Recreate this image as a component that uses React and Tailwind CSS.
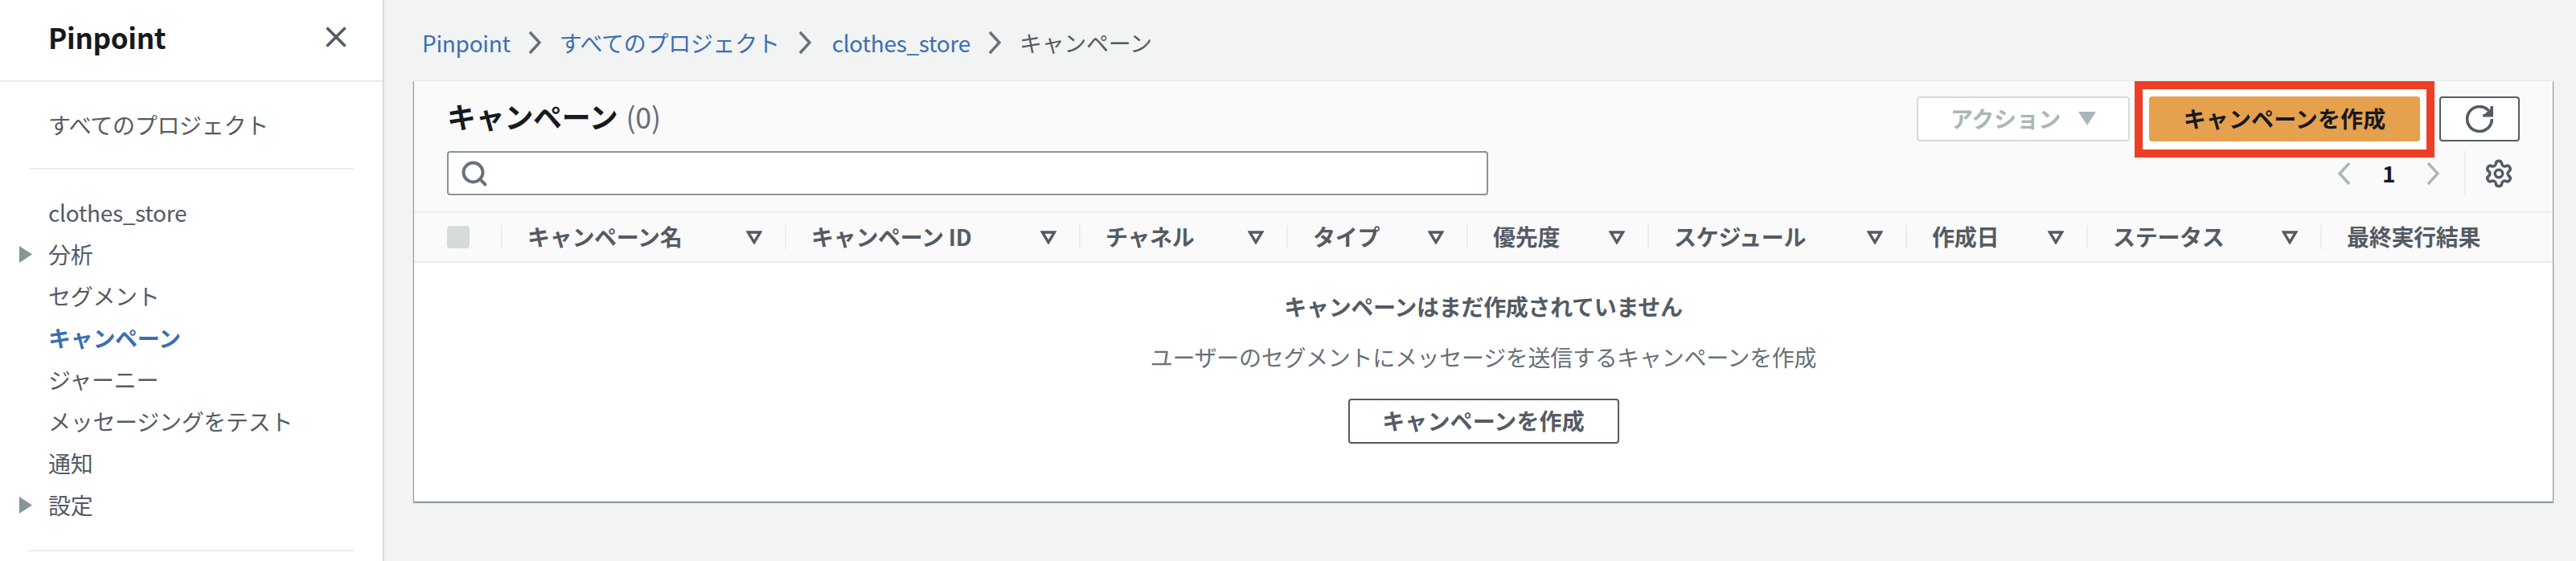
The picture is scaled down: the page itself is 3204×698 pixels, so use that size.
import React from 'react';
import { Search, Settings } from 'lucide-react';

const navItems = [
  { label: 'clothes_store' },
  { label: '分析', expandable: true },
  { label: 'セグメント' },
  { label: 'キャンペーン', active: true },
  { label: 'ジャーニー' },
  { label: 'メッセージングをテスト' },
  { label: '通知' },
  { label: '設定', expandable: true },
];

const columns = [
  { label: 'キャンペーン名', width: 'w-[353px]' },
  { label: 'キャンペーン ID', width: 'w-[366px]' },
  { label: 'チャネル', width: 'w-[258px]' },
  { label: 'タイプ', width: 'w-[224px]' },
  { label: '優先度', width: 'w-[225px]' },
  { label: 'スケジュール', width: 'w-[321px]' },
  { label: '作成日', width: 'w-[225px]' },
  { label: 'ステータス', width: 'w-[291px]' },
  { label: '最終実行結果', width: 'flex-1', noSort: true },
];

const Chevron = ({ dir = 'right', className }) => (
  <svg viewBox="0 0 17 30" className={className} fill="none" stroke="currentColor" strokeWidth="3.4">
    <path d={dir === 'right' ? 'M2 2l12 13L2 28' : 'M15 2L3 15l12 13'} />
  </svg>
);

const SortIcon = () => (
  <svg viewBox="0 0 20 17" className="w-[20px] h-[17px] text-[#545b64]" fill="none" stroke="currentColor" strokeWidth="3.4">
    <path d="M2.5 2h15L10 14.5z" />
  </svg>
);

const RefreshIcon = () => (
  <svg viewBox="0 0 32 32" className="w-[34px] h-[34px]" fill="none" stroke="currentColor" strokeWidth="3.4">
    <path d="M26.5 6A14.5 14.5 0 1 0 30.5 16" />
    <path d="M20 12h10.5V1" />
    <path d="M30.5 3v9H21z" fill="currentColor" strokeWidth="1" />
  </svg>
);

const Sidebar = () => (
  <aside className="w-[478px] h-full shrink-0 bg-white border-r-2 border-[#d5dbdb] flex flex-col">
    <div className="h-[102px] shrink-0 border-b-2 border-[#eaeded] flex items-center justify-between pl-[60px] pr-[45px] pb-[8px]">
      <span className="text-[35px] font-bold text-[#16191f]">Pinpoint</span>
      <svg viewBox="0 0 26 26" className="w-[26px] h-[26px] text-[#545b64]" fill="none" stroke="currentColor" strokeWidth="3.6">
        <path d="M1.5 1.5l23 23M24.5 1.5l-23 23" />
      </svg>
    </div>
    <div className="h-[107px] shrink-0 flex items-center pl-[60px] pb-[2px] text-[28px] text-[#545b64]">
      すべてのプロジェクト
    </div>
    <div className="h-[2px] shrink-0 mx-[36px] bg-[#eaeded]" />
    <nav className="mt-[27px]">
      {navItems.map((item) => (
        <div key={item.label} className="h-[52px] flex items-center relative pl-[60px] text-[28px] text-[#545b64]">
          {item.expandable && (
            <svg viewBox="0 0 16 21" className="absolute left-[24px] w-[16px] h-[21px] text-[#879596]" fill="currentColor">
              <path d="M0 0l16 10.5L0 21z" />
            </svg>
          )}
          <span className={item.active ? 'font-bold text-[#3b6fb1]' : ''}>{item.label}</span>
        </div>
      ))}
    </nav>
    <div className="h-[2px] shrink-0 mx-[36px] mt-[30px] bg-[#eaeded]" />
  </aside>
);

const Breadcrumbs = () => (
  <div className="h-[101px] pt-[5px] pl-[10px] flex items-center text-[28px] text-[#3b6fb1]">
    <span>Pinpoint</span>
    <Chevron className="w-[17px] h-[30px] mx-[22px] text-[#687078]" />
    <span>すべてのプロジェクト</span>
    <Chevron className="w-[17px] h-[30px] ml-[23px] mr-[25px] text-[#687078]" />
    <span>clothes_store</span>
    <Chevron className="w-[17px] h-[30px] mx-[22px] text-[#687078]" />
    <span className="text-[#545b64]">キャンペーン</span>
  </div>
);

const CardHeader = () => (
  <div className="h-[164px] bg-[#fafafa] border-b-2 border-[#eaeded] pt-[19px] pl-[41px] pr-[41px] flex justify-between">
    <div>
      <h1 className="h-[50px] pb-[3px] flex items-center text-[36px] font-bold text-[#16191f]">
        キャンペーン
        <span className="ml-[10px] font-normal text-[#687078]">(0)</span>
      </h1>
      <div className="mt-[18px] w-[1295px] h-[55px] bg-white border-2 border-[#879596] rounded-[4px] flex items-center pl-[14px]">
        <Search className="w-[36px] h-[36px] text-[#687078]" strokeWidth={2.6} />
      </div>
    </div>
    <div>
      <div className="flex items-center">
        <button className="w-[265px] h-[56px] pb-[2px] bg-white border-2 border-[#d5dbdb] rounded-[4px] flex items-center justify-center gap-[22px] text-[28px] font-bold text-[#aab7b8]">
          アクション
          <svg viewBox="0 0 22 17" className="w-[22px] h-[17px]" fill="currentColor">
            <path d="M0 0h22L11 17z" />
          </svg>
        </button>
        <div className="relative ml-[24px]">
          {/* red annotation frame from the screenshot */}
          <div className="absolute -left-[18px] -right-[18px] -top-[19px] -bottom-[20px] bg-white border-[10px] border-[#ec3f25]" />
          <button className="relative w-[337px] h-[56px] pb-[2px] bg-[#e6a14f] rounded-[4px] text-[28px] tracking-[0.1px] font-bold text-[#16191f]">
            キャンペーンを作成
          </button>
        </div>
        <button className="ml-[24px] w-[100px] h-[56px] bg-white border-2 border-[#545b64] rounded-[4px] flex items-center justify-center text-[#545b64]">
          <RefreshIcon />
        </button>
      </div>
      <div className="mt-[12px] h-[55px] flex items-center justify-end pr-[7px]">
        <div className="flex items-center">
          <Chevron dir="left" className="w-[17px] h-[30px] text-[#aab7b8]" />
          <span className="w-[94px] pb-[2px] text-center text-[28px] font-bold text-[#16191f]">1</span>
          <Chevron className="w-[17px] h-[30px] text-[#aab7b8]" />
        </div>
        <div className="w-[2px] h-[55px] ml-[30px] bg-[#eaeded]" />
        <Settings className="w-[38px] h-[38px] ml-[22px] text-[#545b64]" strokeWidth={2.2} />
      </div>
    </div>
  </div>
);

const TableHead = () => (
  <div className="h-[62px] bg-[#fafafa] border-b-2 border-[#eaeded] flex items-center">
    <div className="w-[108px] shrink-0 pl-[41px]">
      <div className="w-[28px] h-[28px] rounded-[4px] bg-[#d5dbdb]" />
    </div>
    {columns.map((col) => (
      <div key={col.label} className={`${col.width} flex items-center text-[28px] font-bold text-[#545b64]`}>
        <div className="w-[2px] h-[30px] shrink-0 bg-[#eaeded]" />
        <span className="ml-[31px] pb-[3px]">{col.label}</span>
        {!col.noSort && (
          <span className="ml-auto mr-[28px]">
            <SortIcon />
          </span>
        )}
      </div>
    ))}
  </div>
);

const EmptyState = () => (
  <div className="h-[297px] bg-white flex flex-col items-center pt-[34px]">
    <p className="h-[40px] leading-[40px] text-[28px] font-bold text-[#545b64]">キャンペーンはまだ作成されていません</p>
    <p className="mt-[23px] h-[40px] leading-[40px] text-[28px] text-[#687078]">ユーザーのセグメントにメッセージを送信するキャンペーンを作成</p>
    <button className="mt-[32px] w-[337px] h-[56px] pb-[2px] bg-white border-2 border-[#545b64] rounded-[4px] text-[28px] tracking-[0.1px] font-bold text-[#545b64]">
      キャンペーンを作成
    </button>
  </div>
);

export default function App() {
  return (
    <div className="w-[3204px] h-[698px] overflow-hidden flex bg-[#f2f3f3] tracking-[-0.3px] font-['Noto_Sans_CJK_JP',sans-serif]">
      <Sidebar />
      <main className="flex-1 min-w-0 pl-[37px] pr-[29px]">
        <Breadcrumbs />
        <section className="shadow-[0_1px_1px_1px_rgba(0,28,36,0.3),1px_1px_1px_0_rgba(0,28,36,0.15),-1px_1px_1px_0_rgba(0,28,36,0.15)]">
          <CardHeader />
          <TableHead />
          <EmptyState />
        </section>
      </main>
    </div>
  );
}
